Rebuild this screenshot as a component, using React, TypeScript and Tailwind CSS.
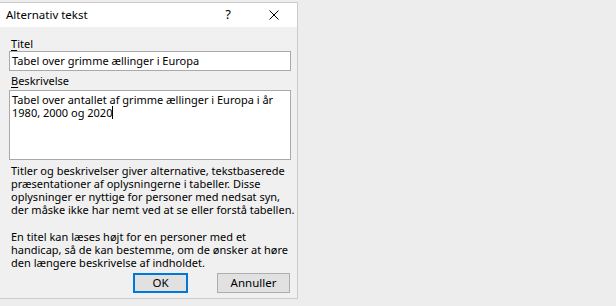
import React from "react";

const font = { fontFamily: "'Noto Sans', 'Open Sans', sans-serif" };

const Label = ({ accel, rest }: { accel: string; rest: string }) => (
  <div className="text-[11px] leading-[14px] text-black">
    <span className="underline underline-offset-2">{accel}</span>
    {rest}
  </div>
);

export default function App() {
  return (
    <div
      className="w-[616px] h-[306px] bg-[#ededed] pt-[2px] text-black"
      style={font}
    >
      <div className="w-[298px] h-[297px] border-t border-r border-b border-[#cbcbcb] bg-[#f0f0f0] flex flex-col">
        {/* title bar */}
        <div className="h-[24px] bg-white flex items-center pl-[6px] shrink-0">
          <span className="text-[11.5px] flex-1">Alternativ tekst</span>
          <span className="text-[13px] w-[46px] text-center">?</span>
          <div className="w-[46px] flex justify-center">
            <svg width="10" height="10" viewBox="0 0 10 10">
              <path d="M0.5 0.5 L9.5 9.5 M9.5 0.5 L0.5 9.5" stroke="#000" strokeWidth="1" />
            </svg>
          </div>
        </div>

        <div className="flex flex-col pl-[9px] pr-[6px] pt-[10px] text-[11px]">
          <div className="pl-[2px]">
            <Label accel="T" rest="itel" />
          </div>
          <div className="h-[20px] bg-white border border-[#a9a9a9] px-[2px] leading-[18px] whitespace-nowrap">
            Tabel over grimme ællinger i Europa
          </div>

          <div className="pl-[2px] mt-[3px]">
            <Label accel="B" rest="eskrivelse" />
          </div>
          <div className="mt-[2px] h-[70px] bg-white border border-[#a9a9a9] px-[2px] pt-[2px] leading-[13px] whitespace-nowrap">
            Tabel over antallet af grimme ællinger i Europa i år
            <br />
            1980, 2000 og 2020
            <span className="inline-block w-px h-[13px] bg-black align-[-2px]" />
          </div>

          <div className="pl-[2px] mt-[4px] leading-[13px] flex flex-col gap-[14px] whitespace-nowrap">
            <p>
              Titler og beskrivelser giver alternative, tekstbaserede
              <br />
              præsentationer af oplysningerne i tabeller. Disse
              <br />
              oplysninger er nyttige for personer med nedsat syn,
              <br />
              der måske ikke har nemt ved at se eller forstå tabellen.
            </p>
            <p>
              En titel kan læses højt for en personer med et
              <br />
              handicap, så de kan bestemme, om de ønsker at høre
              <br />
              den længere beskrivelse af indholdet.
            </p>
          </div>

          <div className="flex justify-end gap-[29px] mt-[4px] pr-[1px]">
            <button className="w-[55px] h-[20px] bg-[#e1e1e1] border-2 border-[#0078d7] text-[11.5px] leading-none">
              OK
            </button>
            <button className="w-[73px] h-[20px] bg-[#e1e1e1] border border-[#adadad] text-[11.5px] leading-none">
              Annuller
            </button>
          </div>
        </div>
      </div>
    </div>
  );
}
